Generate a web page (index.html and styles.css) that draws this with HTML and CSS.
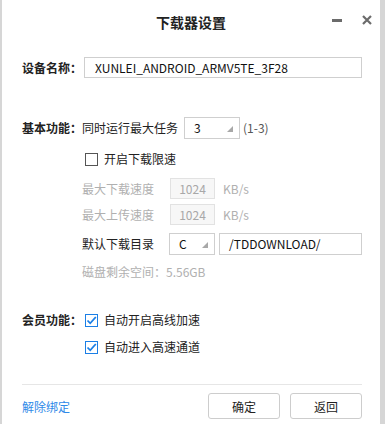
FILE: index.html
```html
<!DOCTYPE html>
<html lang="zh-CN">
<head>
    <meta charset="UTF-8">
    <title>下载器设置</title>
    <link rel="stylesheet" href="styles.css">
</head>
<body>
    <div class="dialog">
        <div class="titlebar">
            <span class="title">下载器设置</span>
            <span class="btn-min"></span>
            <svg class="btn-close" width="10" height="10" viewBox="0 0 10 10">
                <path d="M1 1L9 9M9 1L1 9" stroke="#6b6b6b" stroke-width="2.2"/>
            </svg>
        </div>

        <div class="content">
            <div class="row row-device">
                <span class="label">设备名称：</span>
                <div class="field field-name">XUNLEI_ANDROID_ARMV5TE_3F28</div>
            </div>

            <div class="row row-basic">
                <span class="label">基本功能：</span>
                <span class="text">同时运行最大任务</span>
                <div class="select select-task">3<span class="arrow"></span></div>
                <span class="text hint">(1-3)</span>
            </div>

            <div class="row row-limit indent">
                <span class="check"></span>
                <span class="text">开启下载限速</span>
            </div>

            <div class="row row-speed indent disabled">
                <span class="text sublabel">最大下载速度</span>
                <div class="field field-speed">1024</div>
                <span class="text unit">KB/s</span>
            </div>

            <div class="row row-speed2 indent disabled">
                <span class="text sublabel">最大上传速度</span>
                <div class="field field-speed">1024</div>
                <span class="text unit">KB/s</span>
            </div>

            <div class="row row-dir indent">
                <span class="text sublabel">默认下载目录</span>
                <div class="select select-drive">C<span class="arrow"></span></div>
                <div class="field field-path">/TDDOWNLOAD/</div>
            </div>

            <div class="row row-disk indent disabled">
                <span class="text">磁盘剩余空间：5.56GB</span>
            </div>

            <div class="row row-vip">
                <span class="label">会员功能：</span>
                <span class="check checked">
                    <svg width="13" height="13" viewBox="0 0 13 13"><path d="M2.5 6.5L5.2 9.3L10.8 3" fill="none" stroke="#1b7fe6" stroke-width="1.8"/></svg>
                </span>
                <span class="text">自动开启高线加速</span>
            </div>

            <div class="row row-vip2 indent">
                <span class="check checked">
                    <svg width="13" height="13" viewBox="0 0 13 13"><path d="M2.5 6.5L5.2 9.3L10.8 3" fill="none" stroke="#1b7fe6" stroke-width="1.8"/></svg>
                </span>
                <span class="text">自动进入高速通道</span>
            </div>

            <div class="separator"></div>

            <div class="footer">
                <a href="#" class="unbind">解除绑定</a>
                <div class="buttons">
                    <button class="button">确定</button>
                    <button class="button">返回</button>
                </div>
            </div>
        </div>
    </div>
</body>
</html>
```

FILE: styles.css
```css
* {
    margin: 0;
    padding: 0;
    box-sizing: border-box;
}

body {
    font-family: "Noto Sans CJK SC", "Noto Sans", sans-serif;
    font-size: 12px;
    color: #222;
    background: #d6d6d6;
    width: 385px;
    height: 424px;
    overflow: hidden;
}

.dialog {
    margin-left: 2px;
    width: 378px;
    height: 424px;
    background: #fff;
}

.titlebar {
    position: relative;
    height: 44px;
    display: flex;
    align-items: center;
    justify-content: center;
}

.title {
    font-weight: bold;
    font-size: 14px;
    color: #222;
}

.btn-min {
    position: absolute;
    left: 330px;
    top: 19px;
    width: 10px;
    height: 3px;
    background: #6b6b6b;
}

.btn-close {
    position: absolute;
    left: 360px;
    top: 15px;
}

.content {
    padding: 0 18px 0 20px;
}

.row {
    display: flex;
    align-items: center;
    line-height: 20px;
}

.indent {
    padding-left: 60px;
}

.label {
    width: 60px;
    font-weight: bold;
    color: #222;
    white-space: nowrap;
}

.field {
    height: 21px;
    border: 1px solid #cfcfcf;
    padding: 0 10px;
    line-height: 19px;
    background: #fff;
    color: #111;
}

.row-device {
    margin-top: 13px;
}

.field-name {
    flex: 1;
    margin-left: 2px;
}

.row-basic {
    margin-top: 39px;
}

.select {
    position: relative;
    height: 22px;
    border: 1px solid #cfcfcf;
    line-height: 20px;
    padding-left: 9px;
    color: #111;
}

.select .arrow {
    position: absolute;
    right: 6px;
    bottom: 6px;
    width: 0;
    height: 0;
    border-left: 6px solid transparent;
    border-bottom: 6px solid #a8a8a8;
}

.select-task {
    width: 56px;
    margin-left: 6px;
}

.hint {
    margin-left: 3px;
    color: #555;
}

.row-limit {
    margin-top: 10px;
}

.check {
    display: inline-block;
    width: 13px;
    height: 13px;
    border: 1px solid #555;
    margin-left: 3px;
    margin-right: 6px;
    position: relative;
}

.check svg {
    position: absolute;
    left: -1px;
    top: -1px;
}

.check.checked {
    border-color: #1b7fe6;
}

.disabled .text {
    color: #b0b0b0;
}

.sublabel {
    width: 88px;
}

.field-speed {
    width: 45px;
    height: 21px;
    padding: 0;
    text-align: center;
    background: #f7f7f7;
    border-color: #e2e2e2;
    color: #a8a8a8;
}

.unit {
    margin-left: 8px;
}

.row-speed {
    margin-top: 9px;
}

.row-speed2 {
    margin-top: 5px;
}

.row-dir {
    margin-top: 8px;
}

.select-drive {
    width: 46px;
    margin-left: -1px;
}

.field-path {
    flex: 1;
    height: 22px;
    margin-left: 4px;
    padding-left: 9px;
}

.row-disk {
    margin-top: 7px;
}

.row-vip {
    margin-top: 28px;
}

.row-vip2 {
    margin-top: 7px;
}

.separator {
    margin-top: 27px;
    height: 1px;
    background: #e6e6e6;
}

.footer {
    margin-top: 8px;
    display: flex;
    justify-content: space-between;
    align-items: center;
}

.unbind {
    color: #2f8ae8;
    text-decoration: none;
}

.buttons {
    display: flex;
    gap: 10px;
}

.button {
    width: 72px;
    height: 26px;
    border: 1px solid #cdcdcd;
    border-radius: 3px;
    background: #fff;
    font-family: inherit;
    font-size: 12px;
    color: #222;
}
```
